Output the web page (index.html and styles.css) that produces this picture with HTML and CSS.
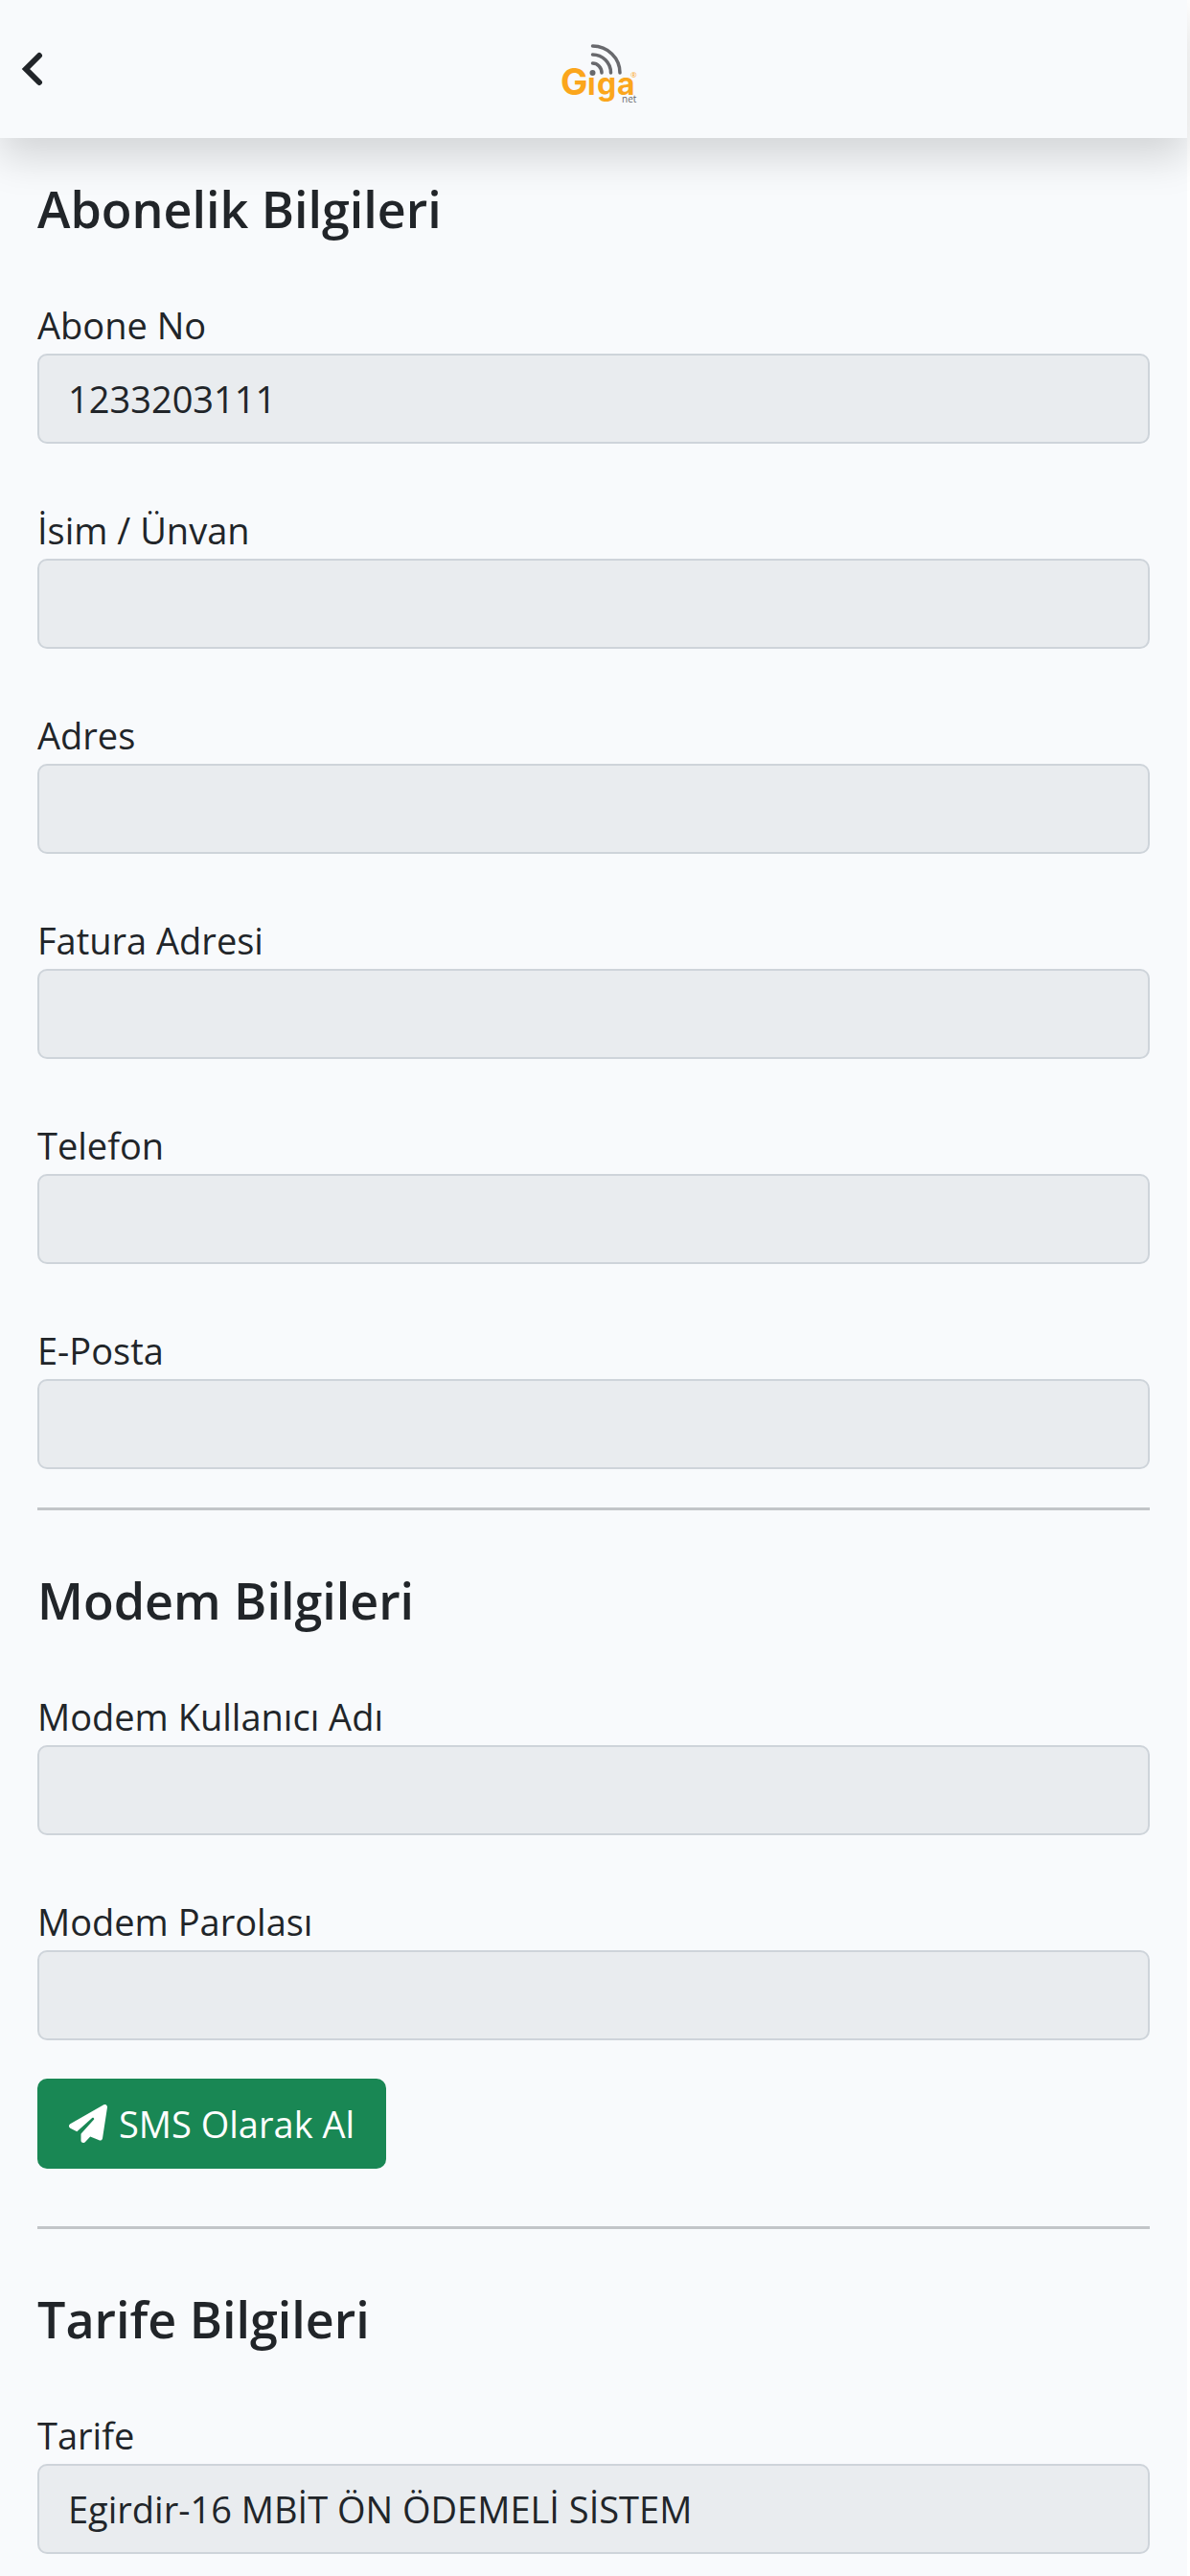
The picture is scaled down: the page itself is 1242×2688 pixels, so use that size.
FILE: index.html
```html
<!DOCTYPE html>
<html lang="tr">
<head>
  <meta charset="UTF-8" />
  <meta name="viewport" content="width=device-width, initial-scale=1.0"/>
  <title>Abonelik Bilgileri</title>
  <link rel="stylesheet" href="styles.css">
</head>
<body>
  <div class="page">
    <header class="topbar">
      <a href="#" class="back" aria-label="Geri">
        <svg width="24" height="36" viewBox="0 0 24 36">
          <path d="M19 4L5 18L19 32" fill="none" stroke="#212529" stroke-width="6" stroke-linecap="round"/>
        </svg>
      </a>
      <svg class="logo" width="92" height="84" viewBox="0 0 92 84" role="img" aria-label="Giganet">
        <text class="logo-initial" x="11" y="69">G</text>
        <text class="logo-name" x="39 49 70" y="69">iga</text>
        <circle cx="44.500" cy="46" r="5" fill="#f8fafc"/>
        <g fill="none" stroke="#68696d" stroke-width="3.500" stroke-linecap="round">
          <path d="M44.500 36A9.500 10 0 0 1 54 46"/>
          <path d="M44.500 27A19 19 0 0 1 63.500 46"/>
          <path d="M44.500 18A28.500 28 0 0 1 73 46"/>
        </g>
        <circle cx="44.500" cy="46" r="3" fill="#68696d"/>
        <text class="logo-mark" x="84" y="51">®</text>
        <text class="logo-net" x="75" y="77">net</text>
      </svg>
    </header>

    <main>
      <section>
        <h2>Abonelik Bilgileri</h2>
        <div class="field">
          <label for="aboneNo">Abone No</label>
          <input type="text" id="aboneNo" value="1233203111" readonly>
        </div>
        <div class="field">
          <label for="isim">İsim / Ünvan</label>
          <input type="text" id="isim" readonly>
        </div>
        <div class="field">
          <label for="adres">Adres</label>
          <input type="text" id="adres" readonly>
        </div>
        <div class="field">
          <label for="faturaAdresi">Fatura Adresi</label>
          <input type="text" id="faturaAdresi" readonly>
        </div>
        <div class="field">
          <label for="telefon">Telefon</label>
          <input type="tel" id="telefon" readonly>
        </div>
        <div class="field">
          <label for="eposta">E-Posta</label>
          <input type="email" id="eposta" readonly>
        </div>
      </section>

      <hr>

      <section>
        <h2>Modem Bilgileri</h2>
        <div class="field">
          <label for="modemKullanici">Modem Kullanıcı Adı</label>
          <input type="text" id="modemKullanici" readonly>
        </div>
        <div class="field">
          <label for="modemParola">Modem Parolası</label>
          <input type="text" id="modemParola" readonly>
        </div>
        <button type="button" class="btn">
          <svg width="40" height="40" viewBox="0 0 512 512" fill="currentColor" aria-hidden="true">
            <path d="M498.1 5.6c10.1 7 15.4 19.1 13.5 31.2l-64 416c-1.5 9.7-7.4 18.2-16 23s-18.9 5.4-28 1.6L284 427.700l-68.500 74.100c-8.900 9.700-22.900 12.900-35.200 8.100S160 493.200 160 480V396.400c0-4 1.500-7.800 4.200-10.700L331.800 202.800c5.800-6.300 5.600-16-.4-22s-15.700-6.400-22-.7L106 360.800 17.700 316.600C7.100 311.300 .3 300.700 0 288.900s5.900-22.800 16.100-28.700l448-256c10.700-6.100 23.900-5.500 34 1.400z"/>
          </svg>
          SMS Olarak Al
        </button>
      </section>

      <hr class="hr-wide">

      <section>
        <h2>Tarife Bilgileri</h2>
        <div class="field">
          <label for="tarife">Tarife</label>
          <input type="text" id="tarife" value="Egirdir-16 MBİT ÖN ÖDEMELİ SİSTEM" readonly>
        </div>
      </section>
    </main>
  </div>
</body>
</html>
```
FILE: styles.css
```css
:root {
  --background: #f8fafc;
  --text: #212529;
  --orange: #fba61c;
  --grey: #68696d;
}

* {
  margin: 0;
  padding: 0;
  box-sizing: border-box;
}

body {
  background: #ffffff;
  color: var(--text);
  font-family: 'Open Sans', 'Noto Sans', sans-serif;
  font-size: 38px;
  line-height: 60px;
}

.page {
  min-height: 100vh;
  margin-right: 3px;
  background: var(--background);
}

.topbar {
  display: grid;
  grid-template-columns: 1fr auto 1fr;
  align-items: center;
  height: 144px;
  padding: 0 22px;
  background: var(--background);
  box-shadow: 0 20px 40px rgba(0, 0, 0, 0.15);
}

.back,
.logo {
  display: block;
}

.back {
  justify-self: start;
}

.back svg {
  display: block;
}

.logo-initial,
.logo-name {
  font-family: Inter, sans-serif;
  font-size: 38px;
  font-weight: 700;
  fill: var(--orange);
}

.logo-name {
  font-size: 32px;
}

.logo-mark {
  font-size: 8px;
  fill: var(--orange);
}

.logo-net {
  font-size: 10px;
  fill: var(--grey);
}

main {
  padding: 40px 39px 20px;
}

h2 {
  margin-bottom: 57px;
  font-size: 52px;
  font-weight: 600;
  line-height: 68px;
}

.field + .field {
  margin-top: 60px;
}

label {
  display: block;
}

input {
  display: block;
  width: 100%;
  height: 94px;
  padding: 0 30px;
  border: 2px solid #ced4da;
  border-radius: 10px;
  background: #e9ecef;
  color: var(--text);
  font: inherit;
  outline: none;
}

hr {
  height: 3px;
  margin: 40px 0 60px;
  border: none;
  background: #c2c5c8;
}

.hr-wide {
  margin-top: 60px;
}

.btn {
  display: flex;
  align-items: center;
  gap: 12px;
  height: 94px;
  margin-top: 40px;
  padding: 0 33px;
  border: none;
  border-radius: 10px;
  background: #198754;
  color: #ffffff;
  font: inherit;
}
```
